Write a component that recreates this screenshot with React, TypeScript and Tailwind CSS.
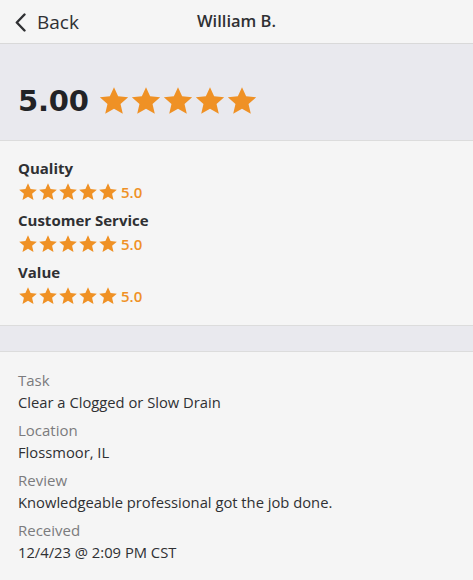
const STAR = 'M12 1.6l3.1 6.9 7.5.7-5.7 5 1.7 7.4L12 17.8l-6.6 3.8 1.7-7.4-5.7-5 7.5-.7z';

function Stars({ size }: { size: number }) {
  return (
    <div className="flex items-center">
      {[0, 1, 2, 3, 4].map((i) => (
        <svg key={i} width={size} height={size} viewBox="0 0 24 24" className="fill-[#ef9125]">
          <path d={STAR} />
        </svg>
      ))}
    </div>
  );
}

const ratings = [
  { label: 'Quality', value: '5.0' },
  { label: 'Customer Service', value: '5.0' },
  { label: 'Value', value: '5.0' },
];

const details = [
  { label: 'Task', value: 'Clear a Clogged or Slow Drain' },
  { label: 'Location', value: 'Flossmoor, IL' },
  { label: 'Review', value: 'Knowledgeable professional got the job done.' },
  { label: 'Received', value: '12/4/23 @ 2:09 PM CST' },
];

export default function App() {
  return (
    <div className="w-[473px] h-[580px] overflow-hidden bg-[#f5f5f5] text-[#2f3033] font-['Open_Sans',sans-serif]">
      {/* шапка */}
      <div className="relative h-[44px] flex items-center border-b border-[#d9d9d9] bg-[#f5f5f5]">
        <div className="flex items-center pl-[15px] pt-[1px] text-[#2f3033]">
          <svg width="11" height="19" viewBox="0 0 11 19" fill="none" stroke="currentColor" strokeWidth={2.4} strokeLinecap="round" strokeLinejoin="round">
            <path d="M9.5 1.5 1.8 9.5l7.7 8" />
          </svg>
          <span className="text-[19px] leading-none ml-[11px]">Back</span>
        </div>
        <div className="absolute inset-0 flex items-center justify-center text-[16.5px] font-semibold">
          William B.
        </div>
      </div>

      {/* общий рейтинг */}
      <div className="bg-[#e9e9ee] pt-[37px] pb-[19px] px-[18px] border-b border-[#dcdcdc] flex items-center gap-[9px]">
        <span className="font-['DejaVu_Sans',sans-serif] text-[29px] leading-[40px] font-bold tracking-[-0.2px] text-[#222326]">5.00</span>
        <Stars size={32} />
      </div>

      {/* оценки */}
      <div className="px-[18px] pt-[15px] pb-[17px] flex flex-col gap-[4px] border-b border-[#dcdcdc]">
        {ratings.map((r) => (
          <div key={r.label}>
            <div className="text-[15px] leading-[24px] font-bold">{r.label}</div>
            <div className="h-[24px] flex items-center gap-[3px]">
              <Stars size={20} />
              <span className="text-[15px] font-semibold text-[#ef9125]">{r.value}</span>
            </div>
          </div>
        ))}
      </div>

      <div className="h-[26px] bg-[#e9e9ee] border-b border-[#dcdcdc]" />

      {/* детали */}
      <div className="px-[18px] pt-[17px] flex flex-col gap-[6px]">
        {details.map((d) => (
          <div key={d.label}>
            <div className="text-[15px] leading-[22px] font-medium text-[#7b7b7d]">{d.label}</div>
            <div className="text-[14.75px] leading-[22px]">{d.value}</div>
          </div>
        ))}
      </div>
    </div>
  );
}
